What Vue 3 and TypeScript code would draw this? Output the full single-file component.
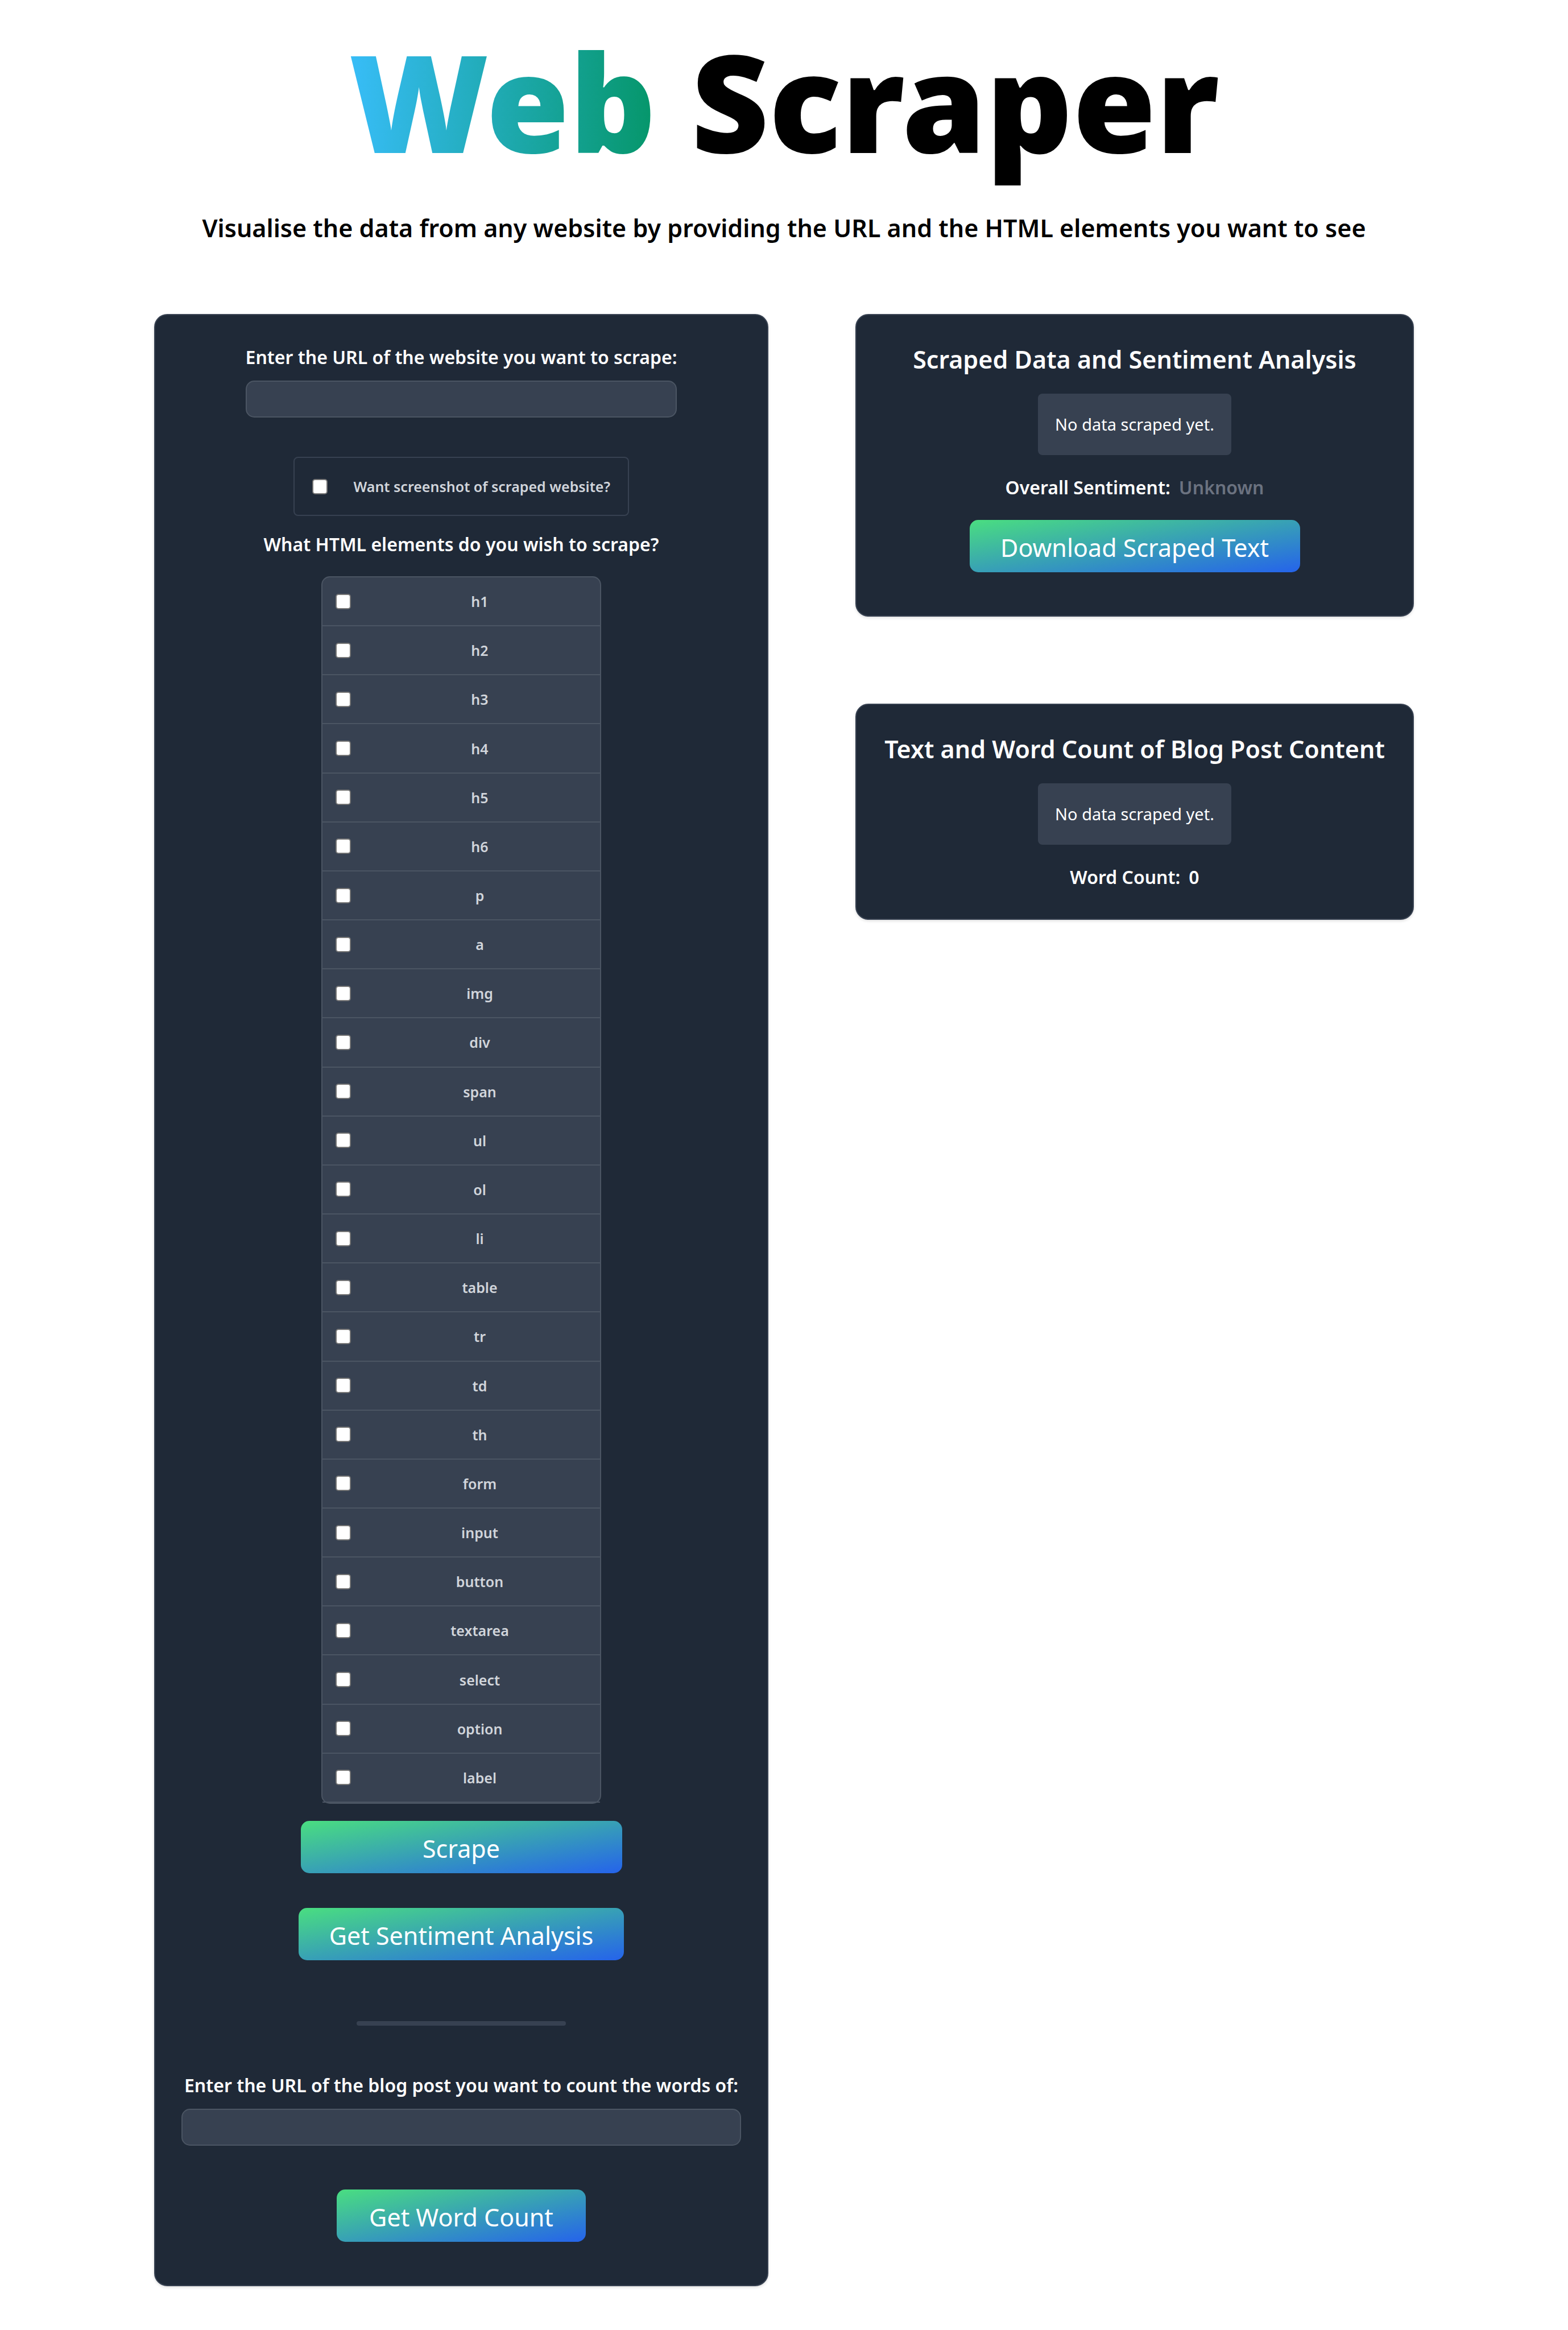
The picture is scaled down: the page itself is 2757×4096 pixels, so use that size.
<script setup lang="ts">
import { ref } from 'vue'

const elements = [
  'h1', 'h2', 'h3', 'h4', 'h5', 'h6', 'p', 'a', 'img', 'div', 'span', 'ul', 'ol',
  'li', 'table', 'tr', 'td', 'th', 'form', 'input', 'button', 'textarea', 'select',
  'option', 'label',
]

const siteUrl = ref('')
const blogUrl = ref('')
const wantScreenshot = ref(false)
const selected = ref<string[]>([])
const sentiment = ref('Unknown')
const wordCount = ref(0)
</script>

<template>
  <div class="page">
    <header class="header">
      <h1 class="title"><span class="accent">Web</span> Scraper</h1>
      <p class="subtitle">
        Visualise the data from any website by providing the URL and the HTML elements you want to see
      </p>
    </header>

    <main class="columns">
      <form class="panel controls" @submit.prevent>
        <div class="field site">
          <label class="text-lg" for="site-url">Enter the URL of the website you want to scrape:</label>
          <input id="site-url" v-model="siteUrl" class="text-input" type="text" />
        </div>

        <div class="screenshot">
          <input id="screenshot" v-model="wantScreenshot" class="check" type="checkbox" />
          <label class="text-sm" for="screenshot">Want screenshot of scraped website?</label>
        </div>

        <h2 class="text-lg">What HTML elements do you wish to scrape?</h2>

        <ul class="list">
          <li v-for="name in elements" :key="name" class="row">
            <input :id="`el-${name}`" v-model="selected" :value="name" class="check" type="checkbox" />
            <label class="text-sm row-label" :for="`el-${name}`">{{ name }}</label>
          </li>
        </ul>

        <button class="btn btn-scrape" type="button">Scrape</button>
        <button class="btn btn-sentiment" type="button">Get Sentiment Analysis</button>

        <hr class="divider" />

        <div class="field blog">
          <label class="text-lg" for="blog-url">Enter the URL of the blog post you want to count the words of:</label>
          <input id="blog-url" v-model="blogUrl" class="text-input" type="text" />
        </div>
        <button class="btn btn-count" type="button">Get Word Count</button>
      </form>

      <div class="results">
        <section class="panel result with-button">
          <h2 class="heading">Scraped Data and Sentiment Analysis</h2>
          <p class="data">No data scraped yet.</p>
          <p class="text-lg pair"><span>Overall Sentiment:</span><span class="muted">{{ sentiment }}</span></p>
          <button class="btn btn-download" type="button">Download Scraped Text</button>
        </section>

        <section class="panel result">
          <h2 class="heading">Text and Word Count of Blog Post Content</h2>
          <p class="data">No data scraped yet.</p>
          <p class="text-lg pair"><span>Word Count:</span><span>{{ wordCount }}</span></p>
        </section>
      </div>
    </main>
  </div>
</template>

<style>
body {
  background: #fff;
}
</style>

<style scoped>
.page {
  box-sizing: border-box;
  padding: 55px 40px 76px;
  font-family: "Noto Sans", "Open Sans", sans-serif;
  color: #000;
}

h1, h2, p, ul, hr {
  margin: 0;
  padding: 0;
}

.header {
  display: flex;
  flex-direction: column;
  align-items: center;
  gap: 70px;
  margin-bottom: 121px;
  text-align: center;
}

.title {
  font-size: 237px;
  line-height: 245px;
  font-weight: 900;
}

.accent {
  background: linear-gradient(to right, #38bdf8, #059669);
  -webkit-background-clip: text;
  background-clip: text;
  color: transparent;
}

.subtitle {
  font-size: 43px;
  line-height: 61px;
  font-weight: 600;
}

.columns {
  display: grid;
  grid-template-columns: 1080fr 982fr;
  align-items: start;
  gap: 153px;
  max-width: 2215px;
  margin: 0 auto;
}

.panel {
  box-sizing: border-box;
  display: flex;
  flex-direction: column;
  align-items: center;
  padding: 47px 46px 46px;
  background: #1f2937;
  border: 2px solid #374151;
  border-radius: 23px;
  box-shadow: 0 2px 4px rgba(0, 0, 0, 0.08), 0 2px 6px rgba(0, 0, 0, 0.06);
  color: #fff;
}

.controls,
.with-button {
  padding-bottom: 76px;
}

.results {
  display: flex;
  flex-direction: column;
  gap: 153px;
}

.result {
  gap: 30px;
}

.text-lg {
  font-size: 32px;
  line-height: 54px;
  font-weight: 600;
  text-align: center;
  white-space: nowrap;
}

.text-sm {
  font-size: 25px;
  line-height: 38px;
  font-weight: 600;
  color: #d1d5db;
}

.field {
  display: flex;
  flex-direction: column;
  align-items: center;
  gap: 14px;
}

.site {
  width: 758px;
  margin-bottom: 69px;
}

.blog {
  width: 984px;
  margin-bottom: 77px;
}

.text-input {
  box-sizing: border-box;
  width: 100%;
  height: 65px;
  padding: 0 20px;
  background: #374151;
  border: 2px solid #4b5563;
  border-radius: 15px;
  font: inherit;
  color: #fff;
}

.check {
  appearance: none;
  box-sizing: border-box;
  flex: none;
  width: 27px;
  height: 27px;
  margin: 0;
  background: #fff;
  border: 2px solid #767676;
  border-radius: 5px;
}

.check:checked {
  background: #2563eb;
}

.screenshot {
  box-sizing: border-box;
  display: flex;
  align-items: center;
  justify-content: space-between;
  width: 590px;
  height: 104px;
  padding: 0 31px;
  margin-bottom: 23px;
  border: 2px solid #374151;
  border-radius: 8px;
}

.list {
  box-sizing: border-box;
  display: flex;
  flex-direction: column;
  width: 492px;
  min-height: 2158px;
  margin: 29px 0 30px;
  background: #374151;
  border: 2px solid #4b5563;
  border-radius: 15px;
  list-style: none;
}

.row {
  display: flex;
  flex: 1;
  align-items: center;
  gap: 15px;
  padding-left: 23px;
  border-bottom: 2px solid #4b5563;
}

.row-label {
  flex: 1;
  text-align: center;
}

.btn {
  box-sizing: border-box;
  height: 92px;
  padding: 4px 0 0;
  border: 0;
  border-radius: 15px;
  background: linear-gradient(to bottom right, #4ade80, #2563eb);
  color: #fff;
  font-family: inherit;
  font-size: 43px;
  line-height: 61px;
  font-weight: 400;
  text-align: center;
  cursor: pointer;
}

.btn-scrape {
  width: 565px;
  margin-bottom: 61px;
}

.btn-sentiment {
  width: 572px;
}

.btn-count {
  width: 438px;
}

.btn-download {
  width: 581px;
}

.divider {
  width: 368px;
  height: 8px;
  margin: 107px 0 78px;
  border: 0;
  border-radius: 4px;
  background: #374151;
}

.heading {
  font-size: 43px;
  line-height: 61px;
  font-weight: 600;
  white-space: nowrap;
}

.data {
  box-sizing: border-box;
  width: 340px;
  padding: 31px 0;
  background: #374151;
  border-radius: 8px;
  font-size: 29px;
  line-height: 46px;
  text-align: center;
}

.pair {
  display: flex;
  gap: 15px;
}

.muted {
  color: #6b7280;
}
</style>
